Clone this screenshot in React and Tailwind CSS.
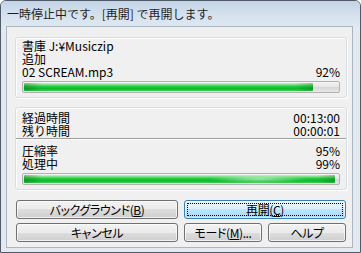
import React from 'react';

const jp = "font-['Noto_Sans_CJK_JP','Noto_Sans',sans-serif]";

const GroupBox = ({ className = '', children }) => (
  <div
    className={`rounded-[3px] border border-[#d5dfe5] shadow-[inset_1px_1px_0_#ffffff,1px_1px_0_#ffffff] ${className}`}
  >
    {children}
  </div>
);

const Row = ({ label, value }) => (
  <div className="flex justify-between px-[6px] leading-[13px]">
    <span>{label}</span>
    <span>{value}</span>
  </div>
);

const ProgressBar = ({ value, glow }) => (
  <div className="mx-[6px] h-[12px] rounded-[2px] border border-[#b2b2b2] bg-[linear-gradient(to_bottom,#f4f4f4,#e6e6e6_45%,#d8d8d8_55%,#e8e8e8)] p-px">
    <div
      className="relative h-full overflow-hidden rounded-[1px] bg-[linear-gradient(to_bottom,#ccf3d1_0%,#7ce08a_20%,#22cb3c_45%,#0fb82c_70%,#3ccd54_100%)]"
      style={{ width: `${value}%` }}
    >
      <div className="absolute inset-0 bg-[linear-gradient(to_right,rgba(0,70,0,0.3),transparent_18px,transparent_calc(100%_-_18px),rgba(0,70,0,0.25))]" />
      {glow && (
        <div className="absolute inset-y-0 left-[185px] w-[100px] bg-[radial-gradient(closest-side,rgba(255,255,255,0.55),transparent)]" />
      )}
    </div>
  </div>
);

const Button = ({ children, focused }) => (
  <button
    type="button"
    className={`relative flex h-[19px] items-center justify-center rounded-[3px] border leading-[12px] tracking-[-0.4px] text-black [font-feature-settings:'palt'] ${
      focused
        ? 'border-[#3c7fb1] bg-[linear-gradient(to_bottom,#eaf6fd,#d9f0fc_50%,#bee6fd_50%,#a7d9f5)] shadow-[inset_0_0_0_1px_rgba(255,255,255,0.5)]'
        : 'border-[#707070] bg-[linear-gradient(to_bottom,#f2f2f2,#ebebeb_50%,#dddddd_50%,#cfcfcf)] shadow-[inset_0_0_0_1px_rgba(255,255,255,0.7)]'
    }`}
  >
    {focused && <span className="absolute inset-[2px] border border-dotted border-black" />}
    {children}
  </button>
);

export default function App() {
  return (
    <div className={`h-[253px] w-[361px] bg-white text-[12px] text-black ${jp}`}>
      <div className="flex h-full flex-col rounded-t-[6px] border border-[#4f5b69] bg-[#e3e9ef]">
        {/* title bar */}
        <div className="flex h-[25px] shrink-0 items-center rounded-t-[5px] bg-[linear-gradient(to_bottom,#c3d4e6,#d3e0ed_50%,#dfe8f1)] pl-[6px] text-[#1e1e1e]">
          一時停止中です。[再開] で再開します。
        </div>

        {/* client area */}
        <div className="mb-[4px] ml-[5px] mr-[7px] flex-1 border border-[#aab6c2] bg-[#f0f0f0] pl-[8px] pr-[5px] pt-[10px]">
          <GroupBox className="pb-[4px] pt-px">
            <div className="px-[6px] leading-[13px]">書庫 J:¥Musiczip</div>
            <div className="px-[6px] leading-[13px]">追加</div>
            <Row label="02 SCREAM.mp3" value="92%" />
            <div className="mt-[3px]">
              <ProgressBar value={92} />
            </div>
          </GroupBox>

          <GroupBox className="mt-[9px] pb-[4px] pt-[3px]">
            <Row label="経過時間" value="00:13:00" />
            <Row label="残り時間" value="00:00:01" />
            <div className="mt-[1px] border-b border-t border-b-white border-t-[#a0a0a0]" />
            <div className="pt-[4px]">
              <Row label="圧縮率" value="95%" />
              <Row label="処理中" value="99%" />
            </div>
            <div className="mt-[3px]">
              <ProgressBar value={99} glow />
            </div>
          </GroupBox>

          <div className="mx-[1px] mt-[10px] grid grid-cols-2 gap-x-[6px] gap-y-[4px]">
            <Button>
              バックグラウンド(<span className="underline">B</span>)
            </Button>
            <Button focused>
              再開(<span className="underline">C</span>)
            </Button>
            <Button>キャンセル</Button>
            <div className="grid grid-cols-2 gap-x-[6px]">
              <Button>
                モード(<span className="underline">M</span>)...
              </Button>
              <Button>ヘルプ</Button>
            </div>
          </div>
        </div>
      </div>
    </div>
  );
}
